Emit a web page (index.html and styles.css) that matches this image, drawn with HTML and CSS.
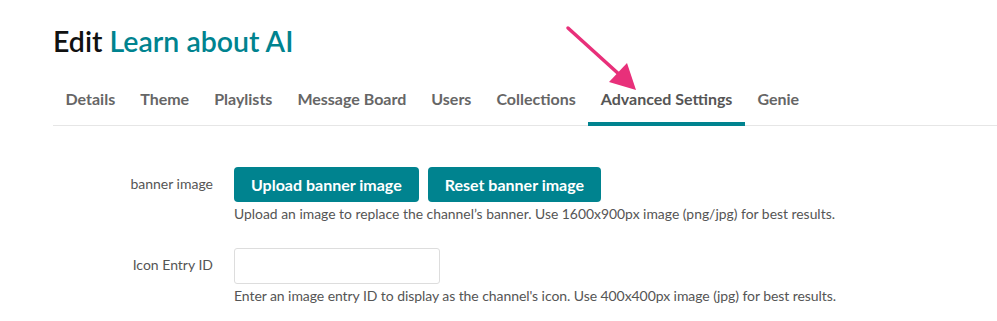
FILE: index.html
```html
<!DOCTYPE html>
<html lang="en">
<head>
    <meta charset="UTF-8">
    <title>Edit Learn about AI</title>
    <link rel="stylesheet" href="styles.css">
</head>
<body>
    <div class="page">
        <h1 class="title">Edit <span class="channel">Learn about AI</span></h1>

        <ul class="tabs">
            <li>Details</li>
            <li>Theme</li>
            <li>Playlists</li>
            <li>Message Board</li>
            <li>Users</li>
            <li>Collections</li>
            <li class="active">Advanced Settings</li>
            <li>Genie</li>
        </ul>

        <div class="form">
            <div class="row">
                <label class="label">banner image</label>
                <div class="field">
                    <div class="buttons">
                        <button>Upload banner image</button>
                        <button>Reset banner image</button>
                    </div>
                    <p class="help">Upload an image to replace the channel&rsquo;s banner. Use 1600x900px image (png/jpg) for best results.</p>
                </div>
            </div>
            <div class="row">
                <label class="label condensed">Icon Entry ID</label>
                <div class="field">
                    <input type="text" class="text-input">
                    <p class="help condensed">Enter an image entry ID to display as the channel's icon. Use 400x400px image (jpg) for best results.</p>
                </div>
            </div>
        </div>

        <!-- annotation arrow pointing at the tab -->
        <svg class="arrow" width="90" height="80" viewBox="0 0 90 80">
            <line x1="5" y1="4" x2="58" y2="52" stroke="#e8307a" stroke-width="3.5" stroke-linecap="round"/>
            <polygon points="73,66 46,58 64,39" fill="#e8307a"/>
        </svg>
    </div>
</body>
</html>
```

FILE: styles.css
```css
body {
    margin: 0;
    font-family: Lato, "Open Sans", Arial, sans-serif;
    background-color: #fff;
    color: #333;
}

.page {
    position: relative;
    padding: 24px 0 0 53px;
}

.title {
    margin: 0;
    font-size: 28.5px;
    font-weight: 600;
    color: #111;
    line-height: 34px;
}

.channel {
    color: #00838f;
}

.tabs {
    list-style: none;
    display: flex;
    margin: 23px 0 0;
    padding: 0;
    border-bottom: 1px solid #e6e6e6;
}

.tabs li {
    padding: 8px 12.5px 14px;
    font-size: 16px;
    font-weight: 700;
    color: #666;
    border-bottom: 4px solid transparent;
    margin-bottom: -1px;
}

.tabs li.active {
    color: #555;
    border-bottom-color: #00838f;
}

.form {
    padding-top: 41px;
}

.row {
    display: flex;
    margin-bottom: 26px;
}

.label {
    width: 160px;
    text-align: right;
    padding-right: 21px;
    padding-top: 8px;
    font-size: 14px;
    color: #555;
}

.buttons {
    display: flex;
    gap: 9px;
}

button {
    height: 35px;
    padding: 0 17px;
    background-color: #00838f;
    color: #fff;
    font-family: inherit;
    font-size: 16px;
    font-weight: 700;
    border: none;
    border-radius: 4px;
}

.text-input {
    display: block;
    width: 206px;
    height: 36px;
    box-sizing: border-box;
    border: 1px solid #ddd;
    border-radius: 3px;
}

.help {
    margin: 3px 0 0;
    font-size: 13.9px;
    color: #555;
}

.help.condensed {
    font-size: 14px;
    letter-spacing: -0.07px;
}

.arrow {
    position: absolute;
    left: 563px;
    top: 24px;
}
```
